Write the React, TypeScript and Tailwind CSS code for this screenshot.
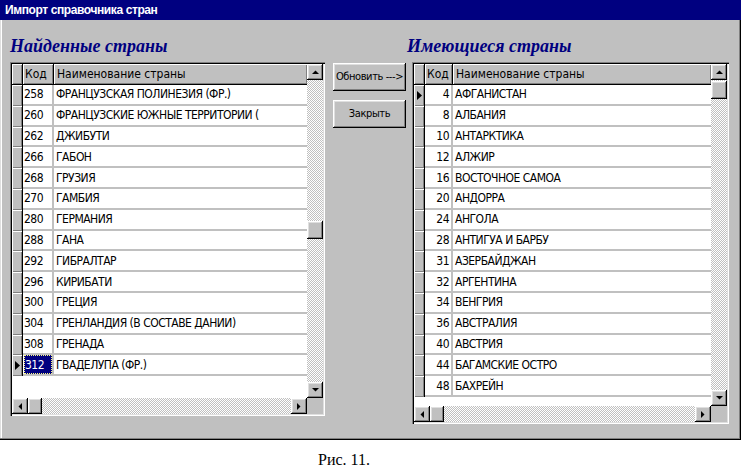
import React from 'react';

const found: [string, string][] = [
  ['258', 'ФРАНЦУЗСКАЯ ПОЛИНЕЗИЯ (ФР.)'],
  ['260', 'ФРАНЦУЗСКИЕ ЮЖНЫЕ ТЕРРИТОРИИ ('],
  ['262', 'ДЖИБУТИ'],
  ['266', 'ГАБОН'],
  ['268', 'ГРУЗИЯ'],
  ['270', 'ГАМБИЯ'],
  ['280', 'ГЕРМАНИЯ'],
  ['288', 'ГАНА'],
  ['292', 'ГИБРАЛТАР'],
  ['296', 'КИРИБАТИ'],
  ['300', 'ГРЕЦИЯ'],
  ['304', 'ГРЕНЛАНДИЯ (В СОСТАВЕ ДАНИИ)'],
  ['308', 'ГРЕНАДА'],
  ['312', 'ГВАДЕЛУПА (ФР.)'],
];

const existing: [string, string][] = [
  ['4', 'АФГАНИСТАН'],
  ['8', 'АЛБАНИЯ'],
  ['10', 'АНТАРКТИКА'],
  ['12', 'АЛЖИР'],
  ['16', 'ВОСТОЧНОЕ САМОА'],
  ['20', 'АНДОРРА'],
  ['24', 'АНГОЛА'],
  ['28', 'АНТИГУА И БАРБУ'],
  ['31', 'АЗЕРБАЙДЖАН'],
  ['32', 'АРГЕНТИНА'],
  ['34', 'ВЕНГРИЯ'],
  ['36', 'АВСТРАЛИЯ'],
  ['40', 'АВСТРИЯ'],
  ['44', 'БАГАМСКИЕ ОСТРО'],
  ['48', 'БАХРЕЙН'],
];

const raised =
  'bg-[#c0c0c0] shadow-[inset_-1px_-1px_#000,inset_1px_1px_#fff,inset_-2px_-2px_#808080,inset_2px_2px_#dfdfdf]';
const checker =
  'bg-[image:repeating-conic-gradient(#c0c0c0_0_25%,#ffffff_0_50%)] bg-[length:2px_2px]';

function Arrow({ dir, big }: { dir: 'up' | 'down' | 'left' | 'right'; big?: boolean }) {
  if (big) {
    return (
      <svg width="5" height="9" viewBox="0 0 5 9">
        <polygon points="0,0 0,9 5,4.5" fill="#000" />
      </svg>
    );
  }
  const pts = {
    up: '0,4 7,4 3.5,0.5',
    down: '0,0 7,0 3.5,3.5',
    left: '4,0 4,7 0.5,3.5',
    right: '0,0 0,7 3.5,3.5',
  }[dir];
  const vertical = dir === 'up' || dir === 'down';
  return (
    <svg width={vertical ? 7 : 4} height={vertical ? 4 : 7} viewBox={vertical ? '0 0 7 4' : '0 0 4 7'}>
      <polygon points={pts} fill="#000" />
    </svg>
  );
}

function ScrollBtn({ dir }: { dir: 'up' | 'down' | 'left' | 'right' }) {
  return (
    <div className={`flex h-[16px] w-[16px] shrink-0 items-center justify-center ${raised}`}>
      <Arrow dir={dir} />
    </div>
  );
}

type GridProps = {
  rows: [string, string][];
  height: string;
  codeWidth: string;
  rightCodes?: boolean;
  markRow: number;
  focusRow?: number;
  vThumbGap: string;
};

function Grid({ rows, height, codeWidth, rightCodes, markRow, focusRow, vThumbGap }: GridProps) {
  return (
    <div
      className={`flex ${height} flex-col bg-white p-[2px] shadow-[inset_1px_1px_#808080,inset_2px_2px_#000,inset_-1px_-1px_#fff,inset_-2px_-2px_#dfdfdf]`}
    >
      <div className="flex min-h-0 flex-1">
        <div className="flex min-w-0 flex-1 flex-col overflow-hidden">
          <div className="flex h-[21px] shrink-0 border-b border-black bg-[#c0c0c0] text-[12px] text-black">
            <div className="w-[11px] shrink-0 border-r border-black shadow-[inset_1px_1px_#fff,inset_-1px_-1px_#808080]" />
            <div
              className={`${codeWidth} flex shrink-0 items-center border-r border-black pl-[2px] shadow-[inset_1px_1px_#fff,inset_-1px_-1px_#808080]`}
            >
              Код
            </div>
            <div className="flex flex-1 items-center pl-[3px] shadow-[inset_1px_1px_#fff,inset_-1px_-1px_#808080]">
              Наименование страны
            </div>
          </div>
          {rows.map(([code, name], i) => (
            <div key={code} className="flex h-[20.8px] shrink-0 text-[12px] tracking-[-0.5px] text-black">
              <div className="flex w-[11px] shrink-0 items-center justify-center border-r border-black bg-[#c0c0c0] shadow-[inset_1px_1px_#fff,inset_-1px_-1px_#808080]">
                {i === markRow && <Arrow dir="right" big />}
              </div>
              <div
                className={`${codeWidth} flex shrink-0 border-r-2 border-b-2 border-[#c0c0c0] ${
                  rightCodes ? 'justify-end pr-[2px]' : 'pl-[1px]'
                }`}
              >
                {i === focusRow ? (
                  <span className="flex h-full w-full items-center bg-[#000080] pl-[1px] text-white outline-1 outline-dotted outline-[#ffff80] -outline-offset-1">
                    {code}
                  </span>
                ) : (
                  <span className="flex items-center">{code}</span>
                )}
              </div>
              <div className="flex flex-1 items-center whitespace-nowrap border-b-2 border-[#c0c0c0] pl-[2px]">
                {name}
              </div>
            </div>
          ))}
          <div className="flex-1" />
        </div>
        <div className="flex w-[16px] shrink-0 flex-col">
          <ScrollBtn dir="up" />
          <div className={`${vThumbGap} shrink-0 ${checker}`} />
          <div className={`h-[18px] w-[16px] shrink-0 ${raised}`} />
          <div className={`flex-1 ${checker}`} />
          <ScrollBtn dir="down" />
        </div>
      </div>
      <div className="flex h-[16px] shrink-0">
        <ScrollBtn dir="left" />
        <div className={`h-[16px] w-[14px] shrink-0 ${raised}`} />
        <div className={`flex-1 ${checker}`} />
        <ScrollBtn dir="right" />
        <div className="w-[16px] shrink-0 bg-[#c0c0c0]" />
      </div>
    </div>
  );
}

export default function App() {
  return (
    <div className="h-[473px] w-[741px] overflow-hidden bg-white font-['Liberation_Sans_Narrow','DejaVu_Sans_Condensed','Liberation_Sans',sans-serif]">
      <div className="flex h-[440px] flex-col bg-[#c0c0c0] shadow-[inset_-1px_-1px_#000,inset_-2px_-2px_#808080,inset_1px_0_#dfdfdf,inset_2px_0_#fff]">
        <div className="flex h-[20px] shrink-0 items-center bg-[#000080] pl-[5px] font-['Liberation_Sans',sans-serif] text-[12px] font-bold tracking-[-0.4px] text-white">
          Импорт справочника стран
        </div>
        <div className="flex flex-1 pl-[10px]">
          <div className="flex w-[315px] shrink-0 flex-col">
            <h2 className="h-[42px] pt-[15px] font-['Liberation_Serif',serif] text-[18px] font-bold italic leading-[22px] text-[#000080]">
              Найденные страны
            </h2>
            <Grid
              rows={found}
              height="h-[354px]"
              codeWidth="w-[31px]"
              markRow={13}
              focusRow={13}
              vThumbGap="h-[141px]"
            />
          </div>
          <div className="ml-[8px] flex w-[73px] shrink-0 flex-col gap-[9px] pt-[43px] text-[11px] tracking-[-0.4px] text-black">
            <button className={`flex h-[28px] items-center justify-center whitespace-nowrap ${raised}`}>
              Обновить ---&gt;
            </button>
            <button className={`flex h-[28px] items-center justify-center whitespace-nowrap ${raised}`}>
              Закрыть
            </button>
          </div>
          <div className="ml-[1px] flex w-[322px] shrink-0 flex-col">
            <h2 className="h-[42px] pt-[15px] font-['Liberation_Serif',serif] text-[18px] font-bold italic leading-[22px] text-[#000080]">
              Имеющиеся страны
            </h2>
            <div className="pl-[5px]">
              <Grid
                rows={existing}
                height="h-[362px]"
                codeWidth="w-[28px]"
                rightCodes
                markRow={0}
                vThumbGap="h-[1px]"
              />
            </div>
          </div>
        </div>
      </div>
      <div className="pl-[318px] pt-[10px] font-['Liberation_Serif',serif] text-[16px] leading-[20px] text-black">
        Рис. 11.
      </div>
    </div>
  );
}
